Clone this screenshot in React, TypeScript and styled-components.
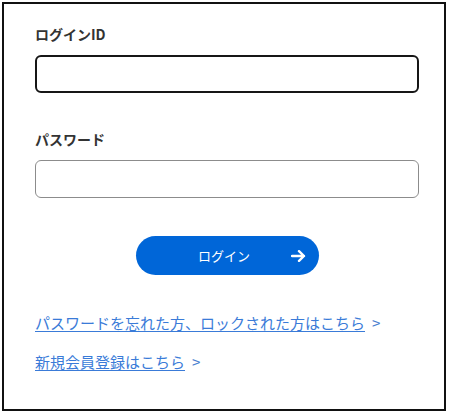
import styled, { createGlobalStyle } from "styled-components";

import type { FC } from "react";

const GlobalStyle = createGlobalStyle`
  body {
    margin: 0;
    background: #ffffff;
    font-family: "Noto Sans CJK JP", "Noto Sans", sans-serif;
  }
`;

const ArrowIcon: FC = () => (
  <svg width="15" height="12" viewBox="0 0 15 12" fill="none">
    <path
      d="M1 6h12M8 1.2L13 6l-5 4.8"
      stroke="#ffffff"
      strokeWidth="2.4"
      strokeLinecap="round"
      strokeLinejoin="round"
    />
  </svg>
);

const App: FC = () => {
  return (
    <>
      <GlobalStyle />
      <Frame>
        <Field>
          <Label>ログインID</Label>
          <Input type="text" $focused />
        </Field>
        <Field>
          <Label>パスワード</Label>
          <Input type="password" />
        </Field>
        <ButtonRow>
          <LoginButton type="button">
            <ButtonText>ログイン</ButtonText>
            <ArrowIcon />
          </LoginButton>
        </ButtonRow>
        <Links>
          <LinkRow>
            <TextLink href="#">パスワードを忘れた方、ロックされた方はこちら</TextLink>
            <Chevron>&gt;</Chevron>
          </LinkRow>
          <LinkRow>
            <TextLink href="#">新規会員登録はこちら</TextLink>
            <Chevron>&gt;</Chevron>
          </LinkRow>
        </Links>
      </Frame>
    </>
  );
};

export default App;

const Frame = styled.div`
  box-sizing: border-box;
  width: 444px;
  height: 409px;
  margin: 2px;
  border: 2px solid #111111;
  padding: 20px 25px 0 31px;
  display: flex;
  flex-direction: column;
`;

const Field = styled.div`
  display: flex;
  flex-direction: column;
  gap: 11px;
  & + & {
    margin-top: 36px;
  }
`;

const Label = styled.div`
  font-size: 14px;
  line-height: 20px;
  font-weight: bold;
  color: #333333;
`;

const Input = styled.input<{ $focused?: boolean }>`
  box-sizing: border-box;
  width: 100%;
  height: 38px;
  margin: 0;
  padding: 0 10px;
  border: ${({ $focused }) => ($focused ? "2.5px solid #161616" : "1px solid #8c8c8c")};
  border-radius: 6px;
  font-size: 15px;
  outline: none;
  background: #ffffff;
`;

const ButtonRow = styled.div`
  display: flex;
  justify-content: center;
  margin-top: 38px;
`;

const LoginButton = styled.button`
  display: flex;
  align-items: center;
  width: 183px;
  height: 39px;
  padding: 0 13px 0 22px;
  border: none;
  border-radius: 20px;
  background: #0066d8;
  color: #ffffff;
  cursor: pointer;
  font-family: inherit;
`;

const ButtonText = styled.span`
  flex: 1;
  text-align: center;
  font-size: 13px;
  line-height: 20px;
`;

const Links = styled.div`
  display: flex;
  flex-direction: column;
  gap: 19px;
  margin-top: 38px;
`;

const LinkRow = styled.div`
  display: flex;
  align-items: center;
  gap: 7px;
  font-size: 15px;
  line-height: 20px;
`;

const TextLink = styled.a`
  color: #3a7bd8;
  text-decoration: underline;
  text-underline-offset: 2px;
`;

const Chevron = styled.span`
  color: #4a7fd0;
  font-size: 15px;
`;
